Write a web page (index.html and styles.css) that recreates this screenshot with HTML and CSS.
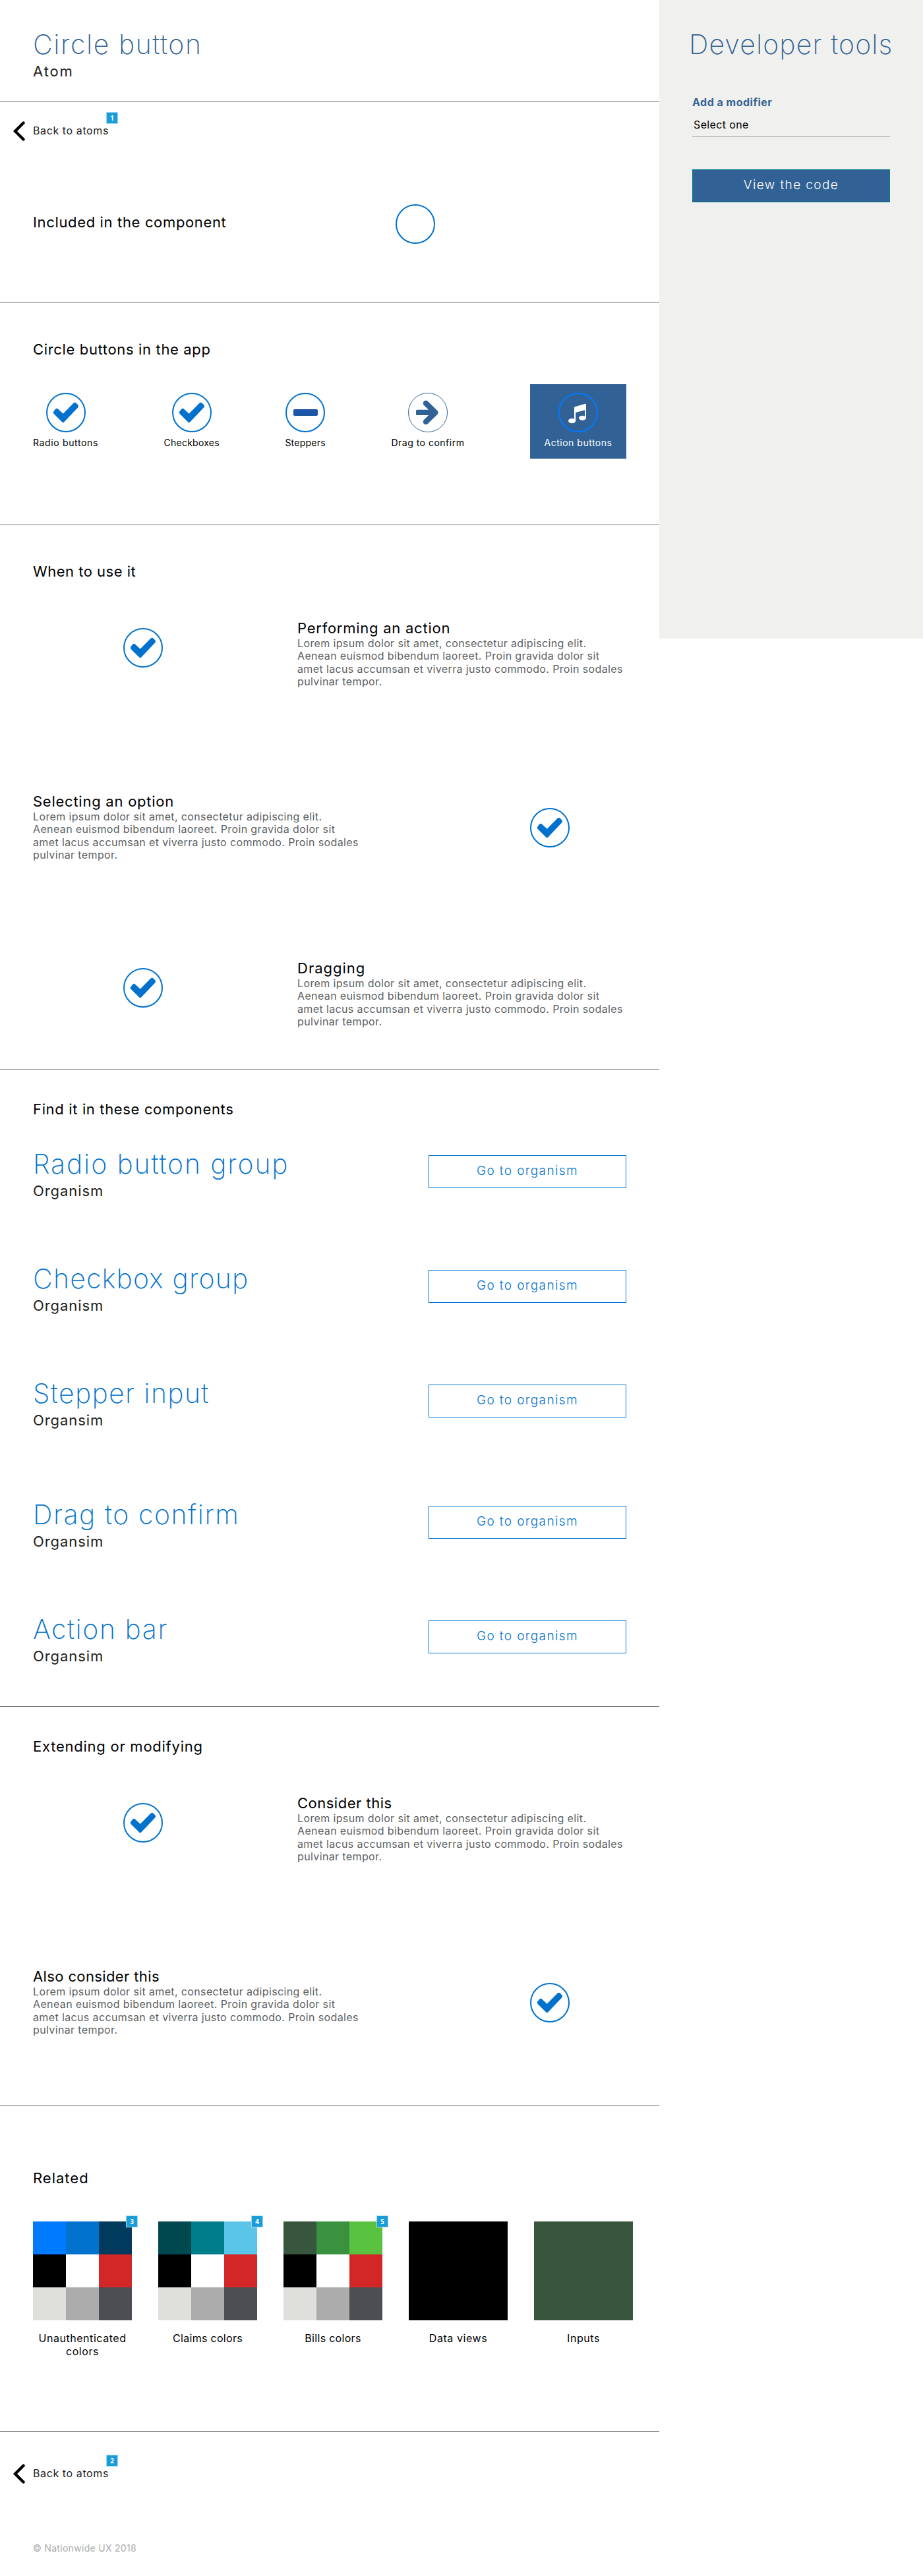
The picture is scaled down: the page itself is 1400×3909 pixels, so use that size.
FILE: index.html
```html
<!DOCTYPE html>
<html lang="en">
<head>
<meta charset="utf-8">
<title>Circle button</title>
<link rel="stylesheet" href="styles.css">
</head>
<body>
<svg class="defs" width="0" height="0" aria-hidden="true">
  <symbol id="check" viewBox="0 0 60 60">
    <circle cx="30" cy="30" r="29" fill="#fff" stroke="#0072ce" stroke-width="2"/>
    <path fill="#0072ce" d="M25.7 31.7 41.8 15.5Q43.7 14 45.4 15.5L48.4 18.6Q49.7 20.4 48.3 22.3L27.4 44.3Q25.7 46 24 44.3L11.4 31.7Q10.2 30 11.4 28.3L14 24.9Q15.9 23 17.9 24.5Z"/>
  </symbol>
  <symbol id="chevron" viewBox="0 0 18 30">
    <path d="M15.5 2.5 3 15 15.5 27.5" fill="none" stroke="#000" stroke-width="4.4" stroke-linecap="round"/>
  </symbol>
</svg>
<div class="page">
  <main class="main">
    <header class="masthead">
      <h1 class="display brand">Circle button</h1>
      <p class="subtitle t-atom">Atom</p>
    </header>

    <section class="section intro">
      <a class="back"><svg class="chevron"><use href="#chevron"/></svg><span class="back-text">Back to atoms</span><span class="badge badge-back">1</span></a>
      <div class="included">
        <h2 class="title">Included in the component</h2>
        <svg class="circle" viewBox="0 0 60 60"><circle cx="30" cy="30" r="29" fill="#fff" stroke="#0072ce" stroke-width="2"/></svg>
      </div>
    </section>

    <section class="section in-app">
      <h2 class="title">Circle buttons in the app</h2>
      <div class="gallery">
        <div class="sample"><svg class="circle"><use href="#check"/></svg><span class="t-radio">Radio buttons</span></div>
        <div class="sample"><svg class="circle"><use href="#check"/></svg><span class="t-check">Checkboxes</span></div>
        <div class="sample"><svg class="circle" viewBox="0 0 60 60"><circle cx="30" cy="30" r="29" fill="#fff" stroke="#0072ce" stroke-width="2"/><rect x="12" y="25" width="37" height="10" rx="2" fill="#1b57a6"/></svg><span class="t-check">Steppers</span></div>
        <div class="sample"><svg class="circle" viewBox="0 0 60 60"><circle cx="30" cy="30" r="29.5" fill="#fff" stroke="#326295"/><rect x="12" y="25.7" width="30" height="8.4" rx="1.5" fill="#326295"/><path d="M27 16 41.3 30 27 44" fill="none" stroke="#326295" stroke-width="8.4" stroke-linecap="round" stroke-linejoin="round"/></svg><span>Drag to confirm</span></div>
        <div class="sample tile"><svg class="circle" viewBox="0 0 60 60"><circle cx="30" cy="30" r="29" fill="none" stroke="#007aff" stroke-width="2"/><path fill="#fff" d="M24 22.5Q24 21.5 25 21.2L40.7 16.8Q42 16.5 42 17.8V38H40.2V26.2L26.2 30V43H24Z"/><ellipse cx="20.6" cy="42.6" rx="5.6" ry="3.6" fill="#fff"/><ellipse cx="36.5" cy="38.2" rx="5.5" ry="3.5" fill="#fff"/></svg><span>Action buttons</span></div>
      </div>
    </section>

    <section class="section usage">
      <h2 class="title t-when">When to use it</h2>
      <div class="feature">
        <svg class="circle"><use href="#check"/></svg>
        <div class="copy"><h3 class="title t-extending">Performing an action</h3><p>Lorem ipsum dolor sit amet, consectetur adipiscing elit. Aenean euismod bibendum laoreet. Proin gravida dolor sit amet lacus accumsan et viverra justo commodo. Proin sodales pulvinar tempor.</p></div>
      </div>
      <div class="feature flipped">
        <div class="copy"><h3 class="title t-extending">Selecting an option</h3><p>Lorem ipsum dolor sit amet, consectetur adipiscing elit. Aenean euismod bibendum laoreet. Proin gravida dolor sit amet lacus accumsan et viverra justo commodo. Proin sodales pulvinar tempor.</p></div>
        <svg class="circle"><use href="#check"/></svg>
      </div>
      <div class="feature">
        <svg class="circle"><use href="#check"/></svg>
        <div class="copy"><h3 class="title t-wide">Dragging</h3><p>Lorem ipsum dolor sit amet, consectetur adipiscing elit. Aenean euismod bibendum laoreet. Proin gravida dolor sit amet lacus accumsan et viverra justo commodo. Proin sodales pulvinar tempor.</p></div>
      </div>
    </section>

    <section class="section components">
      <h2 class="title">Find it in these components</h2>
      <div class="component">
        <div><h3 class="display t-radio-group">Radio button group</h3><p class="subtitle">Organism</p></div>
        <a class="button">Go to organism</a>
      </div>
      <div class="component">
        <div><h3 class="display t-checkbox-group">Checkbox group</h3><p class="subtitle">Organism</p></div>
        <a class="button">Go to organism</a>
      </div>
      <div class="component tall">
        <div><h3 class="display t-stepper">Stepper input</h3><p class="subtitle">Organsim</p></div>
        <a class="button">Go to organism</a>
      </div>
      <div class="component">
        <div><h3 class="display">Drag to confirm</h3><p class="subtitle">Organsim</p></div>
        <a class="button">Go to organism</a>
      </div>
      <div class="component">
        <div><h3 class="display">Action bar</h3><p class="subtitle">Organsim</p></div>
        <a class="button">Go to organism</a>
      </div>
    </section>

    <section class="section extending">
      <h2 class="title t-extending">Extending or modifying</h2>
      <div class="feature">
        <svg class="circle"><use href="#check"/></svg>
        <div class="copy"><h3 class="title t-when">Consider this</h3><p>Lorem ipsum dolor sit amet, consectetur adipiscing elit. Aenean euismod bibendum laoreet. Proin gravida dolor sit amet lacus accumsan et viverra justo commodo. Proin sodales pulvinar tempor.</p></div>
      </div>
      <div class="feature flipped">
        <div class="copy"><h3 class="title t-also">Also consider this</h3><p>Lorem ipsum dolor sit amet, consectetur adipiscing elit. Aenean euismod bibendum laoreet. Proin gravida dolor sit amet lacus accumsan et viverra justo commodo. Proin sodales pulvinar tempor.</p></div>
        <svg class="circle"><use href="#check"/></svg>
      </div>
    </section>

    <section class="section related">
      <h2 class="title t-wide">Related</h2>
      <div class="palettes">
        <div class="palette">
          <div class="swatches"><i class="c-sky"></i><i class="c-blue"></i><i class="c-navy"></i><i class="c-black"></i><i class="c-white"></i><i class="c-red"></i><i class="c-light"></i><i class="c-mid"></i><i class="c-dark"></i></div>
          <span class="badge">3</span>
          <span class="label t-unauth">Unauthenticated colors</span>
        </div>
        <div class="palette">
          <div class="swatches"><i class="c-deepteal"></i><i class="c-teal"></i><i class="c-aqua"></i><i class="c-black"></i><i class="c-white"></i><i class="c-red"></i><i class="c-light"></i><i class="c-mid"></i><i class="c-dark"></i></div>
          <span class="badge">4</span>
          <span class="label">Claims colors</span>
        </div>
        <div class="palette">
          <div class="swatches"><i class="c-forest"></i><i class="c-green"></i><i class="c-lime"></i><i class="c-black"></i><i class="c-white"></i><i class="c-red"></i><i class="c-light"></i><i class="c-mid"></i><i class="c-dark"></i></div>
          <span class="badge">5</span>
          <span class="label">Bills colors</span>
        </div>
        <div class="palette">
          <div class="swatches c-black"></div>
          <span class="label t-unauth">Data views</span>
        </div>
        <div class="palette">
          <div class="swatches c-forest"></div>
          <span class="label t-unauth">Inputs</span>
        </div>
      </div>
    </section>

    <footer class="footer">
      <a class="back"><svg class="chevron"><use href="#chevron"/></svg><span class="back-text">Back to atoms</span><span class="badge badge-back">2</span></a>
      <p class="copyright">© Nationwide UX 2018</p>
    </footer>
  </main>

  <aside class="tools">
    <h2 class="display brand t-tools">Developer tools</h2>
    <div class="field">
      <span class="field-label">Add a modifier</span>
      <div class="select">Select one</div>
    </div>
    <a class="button solid">View the code</a>
  </aside>
</div>
</body>
</html>
```
FILE: styles.css
```css
* {
  box-sizing: border-box;
}

body {
  margin: 0;
  background: #fff;
  color: #000;
  font-family: Inter, "Open Sans", sans-serif;
  font-size: 16px;
  line-height: 20px;
}

h1, h2, h3, p {
  margin: 0;
  font-weight: 400;
}

svg {
  display: block;
  flex: none;
}

.defs {
  position: absolute;
}

.page {
  display: flex;
  align-items: flex-start;
  width: 1400px;
  height: 3909px;
}

.main {
  width: 1000px;
}

/* Type */
.display {
  font-size: 41px;
  line-height: 48px;
  font-weight: 200;
  letter-spacing: 1.55px;
  color: #0072ce;
  white-space: nowrap;
}

.display.brand {
  color: #326295;
}

.subtitle,
.title {
  font-size: 22px;
  line-height: 24px;
  white-space: nowrap;
}

.subtitle {
  margin-top: 5px;
  color: #222;
  letter-spacing: 0.93px;
}

.title {
  letter-spacing: 0.65px;
}

.t-atom { letter-spacing: 1.9px; }
.t-tools { letter-spacing: 1.1px; }
.t-checkbox-group { letter-spacing: 1.2px; }
.t-stepper { letter-spacing: 1.35px; }
.t-radio-group { letter-spacing: 1.85px; }
.t-when { letter-spacing: 0.5px; }
.t-wide { letter-spacing: 1px; }
.t-extending { letter-spacing: 0.75px; }
.t-also { letter-spacing: 0.38px; }
.sample .t-radio { letter-spacing: 0.64px; }
.sample .t-check { letter-spacing: 0.24px; }

/* Shared pieces */
.masthead {
  height: 155px;
  padding: 43px 50px 0;
  border-bottom: 1px solid #757575;
}

.section {
  padding: 0 50px;
  border-bottom: 1px solid #757575;
}

.circle {
  width: 60px;
  height: 60px;
}

.back {
  position: relative;
  display: flex;
  align-items: center;
  gap: 12px;
  height: 30px;
  width: 180px;
}

.chevron {
  width: 18px;
  height: 30px;
}

.back-text {
  padding-bottom: 2px;
  color: #222;
  letter-spacing: 0.6px;
}

.badge {
  position: absolute;
  left: 141px;
  top: -9px;
  width: 18px;
  height: 18px;
  border: 1px solid #a3d8f0;
  background: #1a9cd8;
  color: #fff;
  font: bold 10px/16px "Open Sans", sans-serif;
  text-align: center;
}

.badge-back {
  top: -14px;
}

.button {
  display: block;
  width: 300px;
  height: 50px;
  border: 1px solid #0072ce;
  color: #0072ce;
  font-size: 19px;
  font-weight: 300;
  line-height: 45px;
  letter-spacing: 1.4px;
  text-align: center;
}

/* Intro */
.intro {
  height: 305px;
  padding: 29px 50px 0 20px;
}

.included {
  display: flex;
  margin-top: 96px;
  padding-left: 30px;
}

.included .title {
  width: 550px;
  padding-top: 15px;
}

/* Gallery */
.in-app {
  height: 337px;
  padding-top: 58px;
}

.gallery {
  display: flex;
  justify-content: space-between;
  align-items: flex-start;
  margin-top: 41px;
}

.sample {
  display: flex;
  flex-direction: column;
  align-items: center;
  gap: 8px;
  padding-top: 13px;
  font-size: 14px;
  line-height: 16px;
  letter-spacing: 0.5px;
}

.tile {
  width: 146px;
  height: 113px;
  background: #326295;
  color: #fff;
}

/* Features */
.usage {
  height: 826px;
  padding-top: 58px;
}

.feature {
  display: grid;
  grid-template-columns: 264px 500px;
  align-items: start;
  height: 263px;
  padding-left: 137px;
}

.title + .feature {
  margin-top: 62px;
}

.feature .circle {
  margin-top: 12px;
}

.feature.flipped {
  grid-template-columns: 754px 60px;
  height: 253px;
  padding-left: 0;
}

.feature.flipped .circle {
  margin-top: 22px;
}

.copy p {
  width: 498px;
  margin-top: 2px;
  color: #5c5f63;
  line-height: 19.4px;
  letter-spacing: 0.37px;
}

/* Components */
.components {
  height: 967px;
  padding-top: 48px;
}

.component {
  display: flex;
  justify-content: space-between;
  height: 174px;
}

.component.tall {
  height: 184px;
}

.title + .component {
  margin-top: 47px;
}

.component .button {
  margin-top: 11px;
}

/* Extending */
.extending {
  height: 606px;
  padding-top: 48px;
}

/* Related */
.related {
  height: 494px;
  padding-top: 97px;
}

.palettes {
  display: flex;
  gap: 40px;
  margin-top: 54px;
}

.palette {
  position: relative;
  width: 150px;
  flex: none;
}

.swatches {
  display: grid;
  grid-template-columns: repeat(3, 50px);
  grid-auto-rows: 50px;
  height: 150px;
}

.label {
  display: block;
  margin-top: 17px;
  letter-spacing: 0.3px;
  text-align: center;
}

.label.t-unauth { letter-spacing: 0.55px; }

.c-sky { background: #007aff; }
.c-blue { background: #0072ce; }
.c-navy { background: #003a5d; }
.c-black { background: #000; }
.c-white { background: #fff; }
.c-red { background: #d22627; }
.c-light { background: #dfe0dc; }
.c-mid { background: #abacab; }
.c-dark { background: #4d4e53; }
.c-deepteal { background: #00484f; }
.c-teal { background: #007d8a; }
.c-aqua { background: #5ac5e8; }
.c-forest { background: #37563d; }
.c-green { background: #3a913f; }
.c-lime { background: #59c240; }

/* Footer */
.footer {
  padding: 49px 20px 0;
}

.copyright {
  margin: 90px 0 0 30px;
  color: #abacab;
  font-size: 14px;
  line-height: 16px;
  letter-spacing: 0.3px;
}

/* Developer tools */
.tools {
  width: 400px;
  height: 969px;
  padding: 43px 50px 0;
  background: #f0f0ee;
}

.tools .display {
  margin-left: -5px;
}

.field {
  margin-top: 54px;
}

.field-label {
  display: block;
  color: #326295;
  font-weight: 700;
  letter-spacing: 0.5px;
}

.select {
  height: 29px;
  margin-top: 14px;
  padding-left: 2px;
  border-bottom: 1px solid #abacab;
  letter-spacing: 0.36px;
}

.button.solid {
  margin-top: 49px;
  border-color: #007d8a;
  background: #326295;
  color: #fff;
}
```
